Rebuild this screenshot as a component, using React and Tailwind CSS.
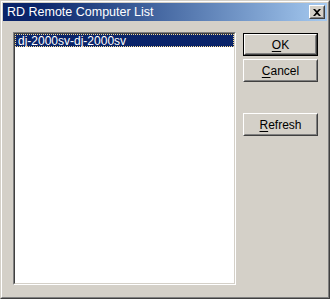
import React from 'react';

const font = { fontFamily: '"Liberation Sans", Arial, sans-serif' };

const Raised = ({ children, className = "" }) => (
    <div className={`border border-t-white border-l-white border-b-[#404040] border-r-[#404040] ${className}`}>
        <div className="w-full h-full border border-t-[#d4d0c8] border-l-[#d4d0c8] border-b-[#808080] border-r-[#808080] flex items-center justify-center">
            {children}
        </div>
    </div>
);

const Button = ({ label, hot, isDefault, className = "" }) => {
    const text = (
        <span className="text-[12px] text-black leading-none">
            <span className="underline underline-offset-2">{hot}</span>{label.slice(hot.length)}
        </span>
    );
    if (isDefault) {
        return (
            <div className={`w-[75px] h-[23px] border border-black ${className}`}>
                <Raised className="w-full h-full">{text}</Raised>
            </div>
        );
    }
    return <Raised className={`w-[75px] h-[23px] ${className}`}>{text}</Raised>;
};

export default function App() {
    return (
        <div style={font} className="w-[330px] h-[299px] bg-[#d4d0c8] border border-t-[#d4d0c8] border-l-[#d4d0c8] border-b-[#404040] border-r-[#404040]">
            <div className="w-full h-full border border-t-white border-l-white border-b-[#808080] border-r-[#808080] p-px flex flex-col">
                {/* title bar */}
                <div className="h-[18px] flex items-center justify-between bg-gradient-to-r from-[#0a246a] from-10% to-[#a6caf0] pl-[4px] pr-[2px]">
                    <span className="text-white text-[12.5px] leading-none">RD Remote Computer List</span>
                    <Raised className="w-[16px] h-[14px] bg-[#d4d0c8]">
                        <svg width="8" height="7" viewBox="0 0 8 7">
                            <path d="M0 0h2l2 2 2-2h2L5 3.5 8 7H6L4 5 2 7H0l3-3.5z" fill="black" />
                        </svg>
                    </Raised>
                </div>

                {/* body */}
                <div className="flex mt-[11px] ml-[10px]">
                    <div className="w-[223px] h-[253px] border border-t-[#808080] border-l-[#808080] border-b-white border-r-white">
                        <div className="w-full h-full border border-t-[#404040] border-l-[#404040] border-b-[#d4d0c8] border-r-[#d4d0c8] bg-white">
                            <div className="h-[13px] bg-[#0a246a] border border-dotted border-[#f5db95] flex items-center pl-[2px]">
                                <span className="text-white text-[12px] leading-none">dj-2000sv-dj-2000sv</span>
                            </div>
                        </div>
                    </div>

                    <div className="flex flex-col ml-[7px] mt-px">
                        <Button label="OK" hot="O" isDefault />
                        <Button label="Cancel" hot="C" className="mt-[3px]" />
                        <Button label="Refresh" hot="R" className="mt-[31px]" />
                    </div>
                </div>
            </div>
        </div>
    );
}
